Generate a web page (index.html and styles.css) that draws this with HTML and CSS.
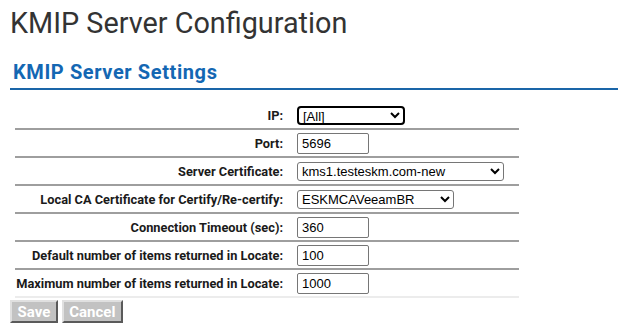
FILE: index.html
```html
<!DOCTYPE html>
<html>
<head>
<meta charset="utf-8">
<link rel="stylesheet" href="styles.css">
</head>
<body>
<h1 class="page-title">KMIP Server Configuration</h1>
<h2 class="section-title">KMIP Server Settings</h2>
<form class="settings">
  <table class="settings-table">
    <tr>
      <td class="label">IP:</td>
      <td class="field"><select class="sel sel-ip focused"><option>[All]</option></select></td>
    </tr>
    <tr>
      <td class="label">Port:</td>
      <td class="field"><input class="txt" type="text" value="5696"></td>
    </tr>
    <tr>
      <td class="label">Server Certificate:</td>
      <td class="field"><select class="sel sel-cert"><option>kms1.testeskm.com-new</option></select></td>
    </tr>
    <tr>
      <td class="label">Local CA Certificate for Certify/Re-certify:</td>
      <td class="field"><select class="sel sel-ca"><option>ESKMCAVeeamBR</option></select></td>
    </tr>
    <tr>
      <td class="label">Connection Timeout (sec):</td>
      <td class="field"><input class="txt" type="text" value="360"></td>
    </tr>
    <tr>
      <td class="label">Default number of items returned in Locate:</td>
      <td class="field"><input class="txt" type="text" value="100"></td>
    </tr>
    <tr class="last">
      <td class="label">Maximum number of items returned in Locate:</td>
      <td class="field"><input class="txt" type="text" value="1000"></td>
    </tr>
  </table>
  <div class="buttons">
    <button type="button" class="btn" disabled>Save</button>
    <button type="button" class="btn" disabled>Cancel</button>
  </div>
</form>
</body>
</html>
```
FILE: styles.css
```css
html, body {
  margin: 0;
  padding: 0;
  background: #fff;
}
body {
  padding: 0 0 0 10px;
  font-family: Roboto, "Liberation Sans", Arial, sans-serif;
  color: #222;
}
.page-title {
  margin: 0;
  padding-top: 4px;
  font-size: 28.8px;
  font-weight: 400;
  line-height: 38px;
  color: #333;
}
.section-title {
  margin: 18px 0 0 0;
  padding: 0 0 4px 3px;
  font-size: 20px;
  font-weight: 700;
  line-height: 24px;
  letter-spacing: 0.6px;
  color: #1467b3;
  border-bottom: 2px solid #1a65a8;
}
.settings {
  margin-top: 12px;
}
.settings-table {
  margin-left: 5px;
  width: 504px;
  border-collapse: collapse;
  table-layout: fixed;
}
.settings-table td {
  border-bottom: 2px solid #9e9e9e;
  height: 26px;
  padding: 0;
}
.settings-table tr.last td {
  border-bottom: 2px solid #ececec;
}
.label {
  width: 268px;
  text-align: right;
  font-weight: 700;
  font-size: 12.8px;
  color: #1a1a1a;
  padding-right: 14px !important;
  white-space: nowrap;
}
.txt {
  box-sizing: border-box;
  width: 72px;
  height: 21px;
  margin: 0;
  padding: 0 4px;
  font-family: "Liberation Sans", Arial, sans-serif;
  font-size: 13px;
  color: #000;
  border: 1px solid #767676;
  border-radius: 2px;
  background: #fff;
  display: block;
}
.sel {
  box-sizing: border-box;
  height: 19px;
  margin: 0;
  padding: 0;
  font-family: "Liberation Sans", Arial, sans-serif;
  font-size: 13px;
  color: #000;
  border: 1px solid #767676;
  border-radius: 3px;
  background: #fff;
  display: block;
}
.sel-ip { width: 108px; }
.sel-cert { width: 207px; }
.sel-ca { width: 157px; }
.focused {
  border: 2px solid #000;
  border-radius: 4px;
}
.buttons {
  display: flex;
  gap: 4px;
  margin-top: 2px;
}
.btn {
  height: 23px;
  padding: 0 5.5px;
  font-family: Roboto, "Liberation Sans", Arial, sans-serif;
  font-size: 15px;
  font-weight: 700;
  color: #fff;
  background: #c2c2c2;
  border: 2px solid;
  border-color: #e0e0e0 #5a5a5a #5a5a5a #e0e0e0;
}
```
